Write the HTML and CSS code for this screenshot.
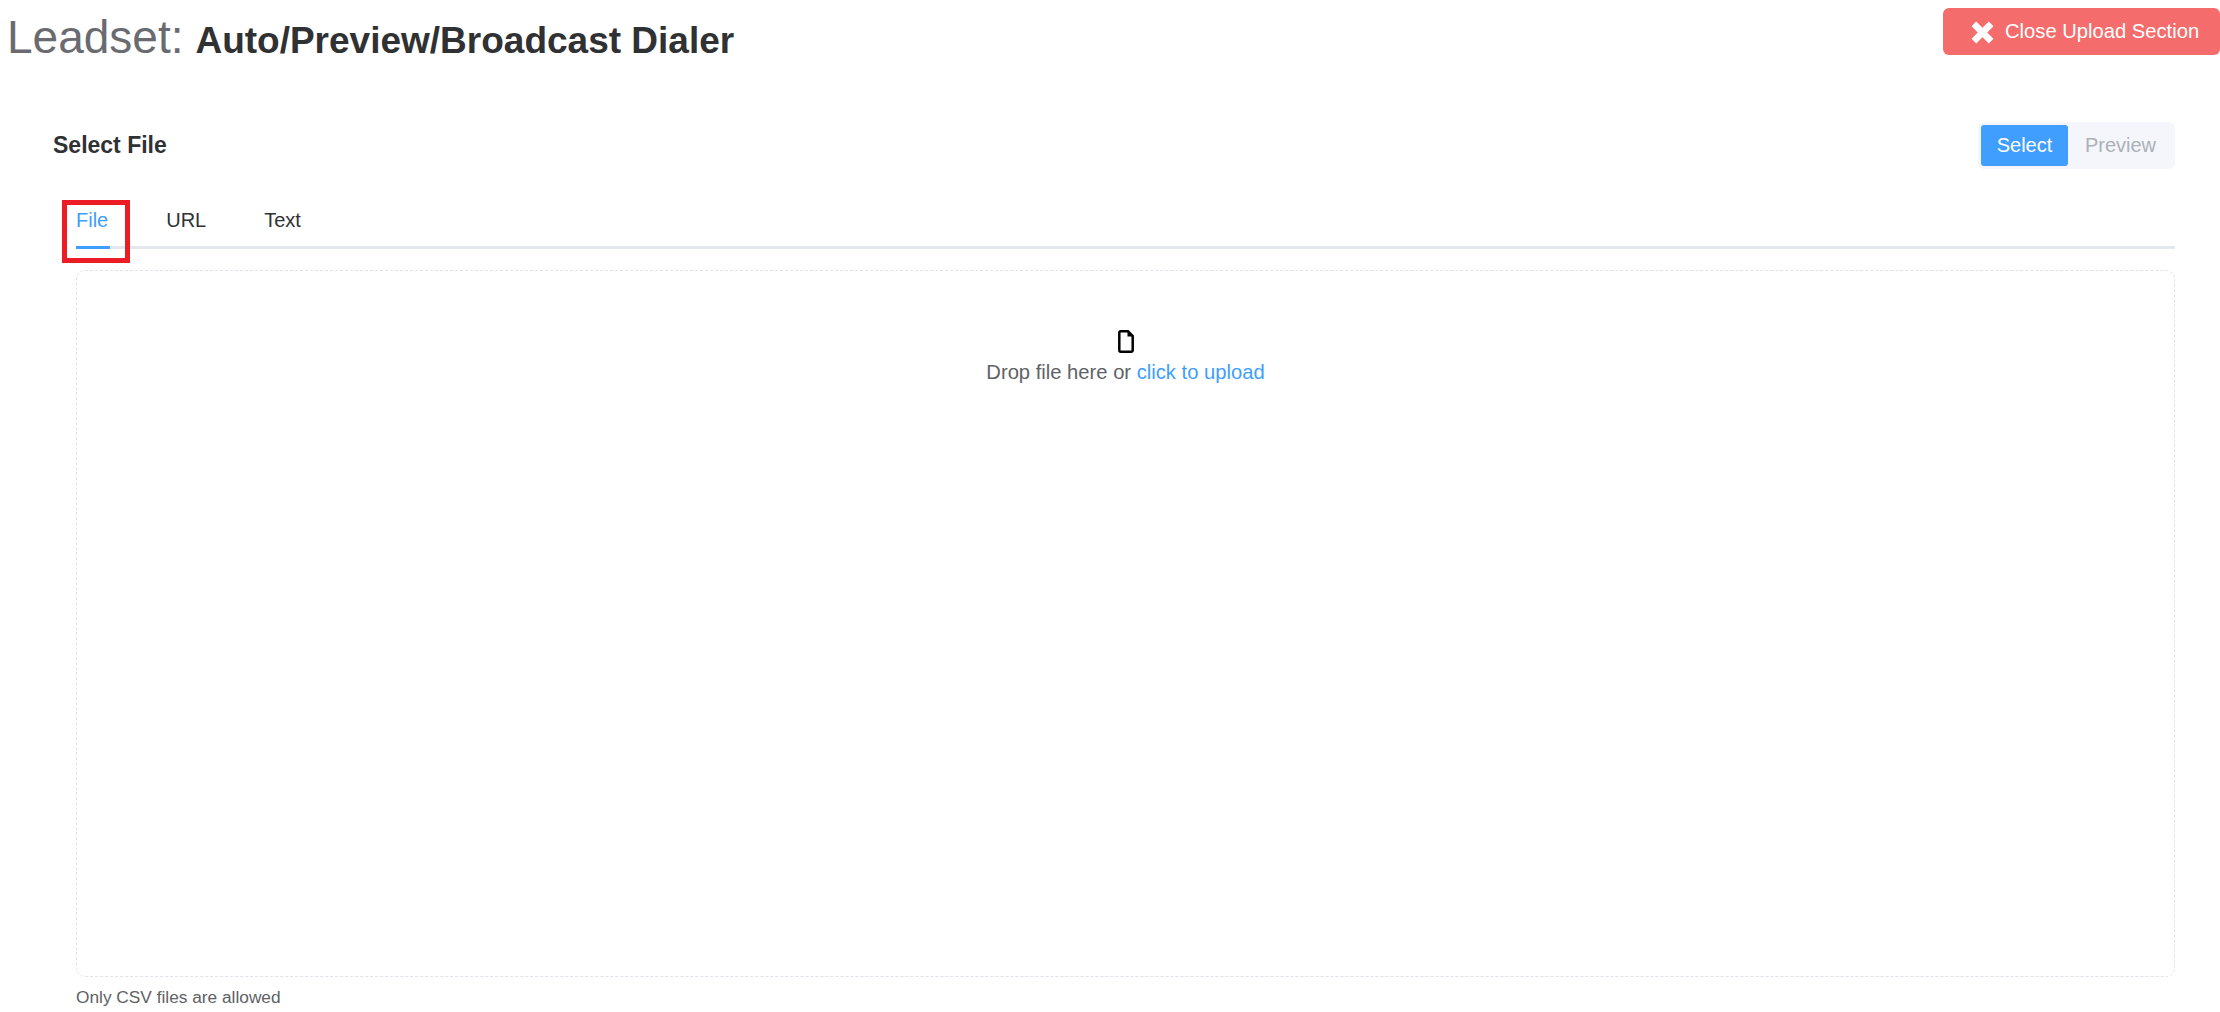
FILE: index.html
```html
<!DOCTYPE html>
<html lang="en">
<head>
<meta charset="utf-8">
<title>Leadset</title>
<link rel="stylesheet" href="styles.css">
</head>
<body>
<header class="top">
  <h1 class="title"><span class="title-label">Leadset:</span> <span class="title-name">Auto/Preview/Broadcast Dialer</span></h1>
  <button class="close-btn"><svg class="close-icon" viewBox="0 0 22 22"><path d="M5 .5 11 6.500 17 .5 21.500 5 15.500 11 21.500 17 17 21.500 11 15.500 5 21.500 .5 17 6.500 11 .5 5Z" fill="#fff"/></svg>Close Upload Section</button>
</header>
<section class="panel">
  <div class="panel-head">
    <h2 class="panel-title">Select File</h2>
    <div class="switch">
      <span class="switch-item is-on">Select</span>
      <span class="switch-item">Preview</span>
    </div>
  </div>
  <div class="body">
    <nav class="tabs">
      <a class="tab is-active">File<i class="marker"></i></a>
      <a class="tab">URL</a>
      <a class="tab">Text</a>
    </nav>
    <div class="drop">
      <svg class="file-icon" viewBox="0 0 16 23"><path d="M2.500 1.300H10L14.700 6V20.200A1.500 1.500 0 0 1 13.200 21.700H2.800A1.500 1.500 0 0 1 1.300 20.200V2.500A1.200 1.200 0 0 1 2.500 1.300Z" fill="#fff" stroke="#000" stroke-width="2.500"/><path d="M9.500 1.300 14.700 6.500H9.500Z" fill="#000"/></svg>
      <p class="drop-text">Drop file here or <em>click to upload</em></p>
    </div>
    <p class="hint">Only CSV files are allowed</p>
  </div>
</section>
</body>
</html>
```
FILE: styles.css
```css
*, *::before, *::after { box-sizing: border-box; }
html, body { margin: 0; height: 100%; }
body {
  background: #fff;
  font-family: "Liberation Sans", Arial, sans-serif;
  color: #303133;
  overflow: hidden;
}
.top {
  display: flex;
  justify-content: space-between;
  align-items: flex-start;
  height: 122px;
  padding-left: 7px;
}
.title {
  margin: 12px 0 0;
  font-size: 37px;
  line-height: 50px;
  font-weight: 700;
  white-space: nowrap;
}
.title-label { font-weight: 400; font-size: 46px; color: #696b70; margin-right: 3px; }
.title-name { color: #303133; }
.close-btn {
  display: flex;
  align-items: center;
  width: 277px;
  height: 47px;
  margin-top: 8px;
  padding: 0 0 0 28px;
  border: 0;
  border-radius: 6px;
  background: #f56c6c;
  color: #fff;
  font: 20.2px "Liberation Sans", Arial, sans-serif;
}
.close-icon { width: 23px; height: 23px; margin: 2px 11px 0 0; }
.panel { padding-left: 53px; padding-right: 45px; }
.panel-head {
  display: flex;
  justify-content: space-between;
  align-items: center;
  height: 47px;
}
.panel-title { margin: 0; font-size: 23px; font-weight: 700; color: #303133; }
.switch {
  display: flex;
  width: 197px;
  height: 47px;
  padding: 3px 2px 3px 3px;
  background: #f4f6fb;
  border-radius: 6px;
  font-size: 20px;
}
.switch-item { display: flex; align-items: center; justify-content: center; flex: 1; color: #adb0b8; }
.switch-item.is-on { flex: 0 0 87px; background: #409eff; color: #fff; border-radius: 3px; }
.body { padding-left: 23px; }
.tabs {
  display: flex;
  height: 80px;
  padding-top: 36px;
  border-bottom: 3px solid #e4e7ed;
  gap: 58px;
  font-size: 20px;
}
.tab { position: relative; line-height: 30px; color: #303133; }
.tab.is-active { color: #409eff; }
.tab.is-active::after {
  content: "";
  position: absolute;
  left: -14px;
  right: -22px;
  top: -5px;
  height: 63px;
  border: 5px solid #ec1c24;
}
.marker { position: absolute; left: 0; right: -2px; top: 41px; height: 3px; background: #409eff; }
.drop {
  display: flex;
  flex-direction: column;
  align-items: center;
  height: 707px;
  margin-top: 21px;
  padding-top: 59px;
  border: 1px dashed #e0e3ea;
  border-radius: 9px;
}
.file-icon { width: 16px; height: 23px; display: block; }
.drop-text { margin: 6px 0 0; font-size: 20.2px; line-height: 26px; color: #606266; }
.drop-text em { font-style: normal; color: #409eff; }
.hint { margin: 10px 0 0; font-size: 17.3px; line-height: 20px; color: #606266; }
```
